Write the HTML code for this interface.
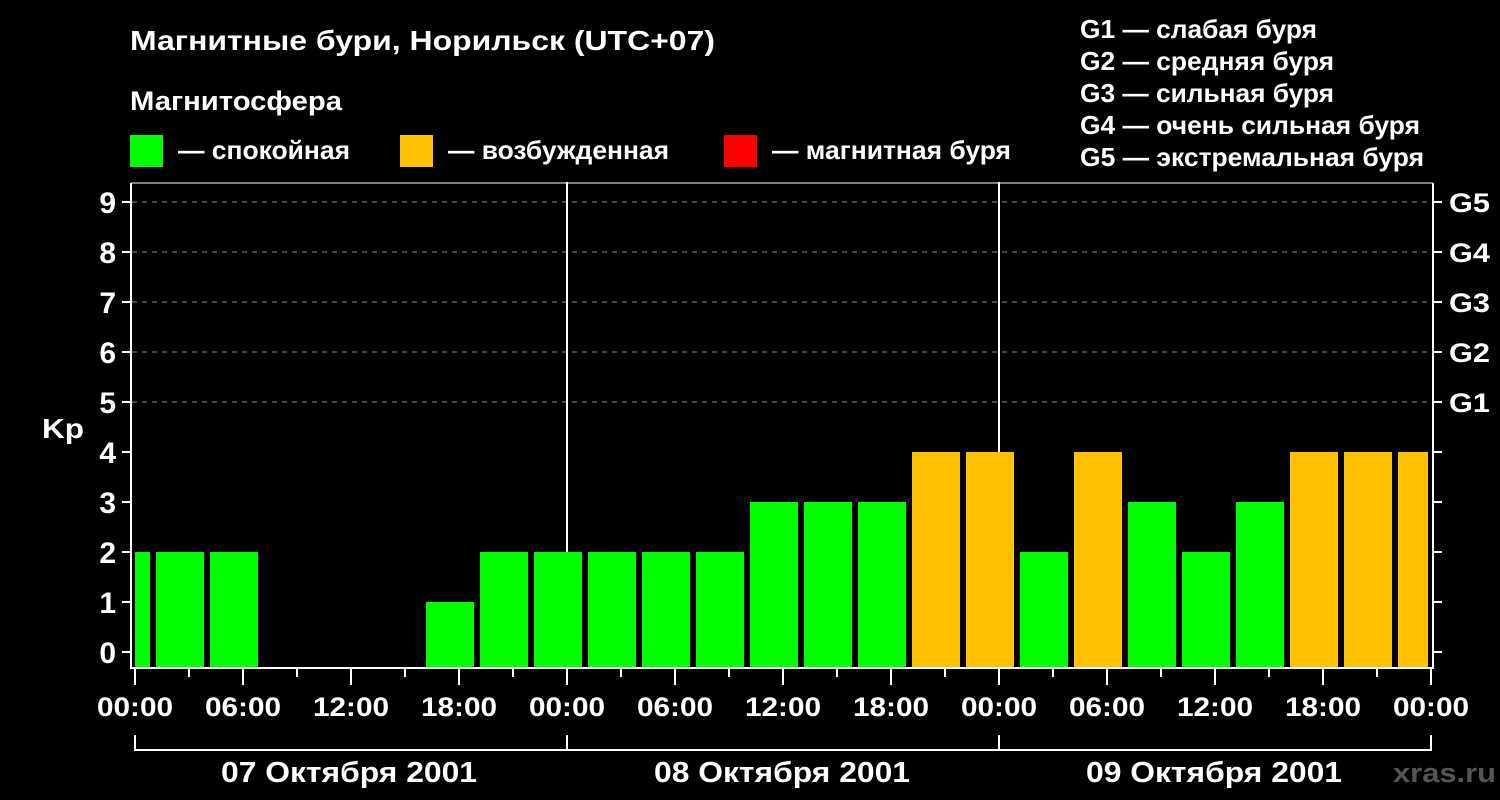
<!DOCTYPE html><html><head><meta charset="utf-8"><style>body{margin:0;background:#000}svg{display:block}text{font-family:"Liberation Sans",sans-serif;font-weight:bold;fill:#fff}</style></head><body>
<svg width="1500" height="800" viewBox="0 0 1500 800">
<rect width="1500" height="800" fill="#000"/>
<text x="130" y="50" font-size="28" textLength="585" lengthAdjust="spacingAndGlyphs">Магнитные бури, Норильск (UTC+07)</text>
<text x="130" y="110" font-size="27" textLength="212" lengthAdjust="spacingAndGlyphs">Магнитосфера</text>
<rect x="130" y="135" width="33" height="32" fill="#00ff00"/><text x="178" y="159" font-size="26" textLength="172" lengthAdjust="spacingAndGlyphs">— спокойная</text>
<rect x="400" y="135" width="33" height="32" fill="#ffc000"/><text x="448" y="159" font-size="26" textLength="221" lengthAdjust="spacingAndGlyphs">— возбужденная</text>
<rect x="724" y="135" width="33" height="32" fill="#ff0000"/><text x="772" y="159" font-size="26" textLength="239" lengthAdjust="spacingAndGlyphs">— магнитная буря</text>
<g font-size="26"><text x="1080" y="38" textLength="237" lengthAdjust="spacingAndGlyphs">G1 — слабая буря</text><text x="1080" y="70" textLength="254" lengthAdjust="spacingAndGlyphs">G2 — средняя буря</text><text x="1080" y="102" textLength="254" lengthAdjust="spacingAndGlyphs">G3 — сильная буря</text><text x="1080" y="134" textLength="340" lengthAdjust="spacingAndGlyphs">G4 — очень сильная буря</text><text x="1080" y="166" textLength="344" lengthAdjust="spacingAndGlyphs">G5 — экстремальная буря</text></g>
<g stroke="#888" stroke-width="1" stroke-dasharray="5,5"><line x1="132" x2="1432" y1="202" y2="202"/><line x1="132" x2="1432" y1="252" y2="252"/><line x1="132" x2="1432" y1="302" y2="302"/><line x1="132" x2="1432" y1="352" y2="352"/><line x1="132" x2="1432" y1="402" y2="402"/></g>
<g fill="#00ff00"><rect x="135" y="552" width="15" height="116"/><rect x="156" y="552" width="48" height="116"/><rect x="210" y="552" width="48" height="116"/><rect x="426" y="602" width="48" height="66"/><rect x="480" y="552" width="48" height="116"/><rect x="534" y="552" width="48" height="116"/><rect x="588" y="552" width="48" height="116"/><rect x="642" y="552" width="48" height="116"/><rect x="696" y="552" width="48" height="116"/><rect x="750" y="502" width="48" height="166"/><rect x="804" y="502" width="48" height="166"/><rect x="858" y="502" width="48" height="166"/><rect x="1020" y="552" width="48" height="116"/><rect x="1128" y="502" width="48" height="166"/><rect x="1182" y="552" width="48" height="116"/><rect x="1236" y="502" width="48" height="166"/></g>
<g fill="#ffc000"><rect x="912" y="452" width="48" height="216"/><rect x="966" y="452" width="48" height="216"/><rect x="1074" y="452" width="48" height="216"/><rect x="1290" y="452" width="48" height="216"/><rect x="1344" y="452" width="48" height="216"/><rect x="1398" y="452" width="30" height="216"/></g>
<g stroke="#fff" stroke-width="2" fill="none">
<path d="M131 183V668H1433V183"/><line x1="131" x2="1433" y1="183" y2="183" stroke-width="1"/>
<line x1="567" x2="567" y1="182" y2="552"/><line x1="999" x2="999" y1="182" y2="452"/>
<path d="M122 202h9M122 252h9M122 302h9M122 352h9M122 402h9M122 452h9M122 502h9M122 552h9M122 602h9M122 652h9"/>
<path d="M1433 202h9M1433 252h9M1433 302h9M1433 352h9M1433 402h9M1433 452h9M1433 502h9M1433 552h9M1433 602h9M1433 652h9"/>
<path d="M135 668v17M189 668v9M243 668v17M297 668v9M351 668v17M405 668v9M459 668v17M513 668v9M567 668v17M621 668v9M675 668v17M729 668v9M783 668v17M837 668v9M891 668v17M945 668v9M999 668v17M1053 668v9M1107 668v17M1161 668v9M1215 668v17M1269 668v9M1323 668v17M1377 668v9M1431 668v17"/>
<path d="M135 735V750H1431V735M567 735v15M999 735v15"/>
</g>
<g font-size="30" text-anchor="end"><text x="116" y="213">9</text><text x="116" y="263">8</text><text x="116" y="313">7</text><text x="116" y="363">6</text><text x="116" y="413">5</text><text x="116" y="463">4</text><text x="116" y="513">3</text><text x="116" y="563">2</text><text x="116" y="613">1</text><text x="116" y="663">0</text></g>
<text x="42" y="438" font-size="28" textLength="42" lengthAdjust="spacingAndGlyphs">Kp</text>
<g font-size="27"><text x="1449" y="212" textLength="41" lengthAdjust="spacingAndGlyphs">G5</text><text x="1449" y="262" textLength="41" lengthAdjust="spacingAndGlyphs">G4</text><text x="1449" y="312" textLength="41" lengthAdjust="spacingAndGlyphs">G3</text><text x="1449" y="362" textLength="41" lengthAdjust="spacingAndGlyphs">G2</text><text x="1449" y="412" textLength="41" lengthAdjust="spacingAndGlyphs">G1</text></g>
<g font-size="27" text-anchor="middle"><text x="135" y="716" textLength="76" lengthAdjust="spacingAndGlyphs">00:00</text><text x="243" y="716" textLength="76" lengthAdjust="spacingAndGlyphs">06:00</text><text x="351" y="716" textLength="76" lengthAdjust="spacingAndGlyphs">12:00</text><text x="459" y="716" textLength="76" lengthAdjust="spacingAndGlyphs">18:00</text><text x="567" y="716" textLength="76" lengthAdjust="spacingAndGlyphs">00:00</text><text x="675" y="716" textLength="76" lengthAdjust="spacingAndGlyphs">06:00</text><text x="783" y="716" textLength="76" lengthAdjust="spacingAndGlyphs">12:00</text><text x="891" y="716" textLength="76" lengthAdjust="spacingAndGlyphs">18:00</text><text x="999" y="716" textLength="76" lengthAdjust="spacingAndGlyphs">00:00</text><text x="1107" y="716" textLength="76" lengthAdjust="spacingAndGlyphs">06:00</text><text x="1215" y="716" textLength="76" lengthAdjust="spacingAndGlyphs">12:00</text><text x="1323" y="716" textLength="76" lengthAdjust="spacingAndGlyphs">18:00</text><text x="1431" y="716" textLength="76" lengthAdjust="spacingAndGlyphs">00:00</text></g>
<g font-size="29" text-anchor="middle"><text x="349" y="782" textLength="256" lengthAdjust="spacingAndGlyphs">07 Октября 2001</text><text x="782" y="782" textLength="256" lengthAdjust="spacingAndGlyphs">08 Октября 2001</text><text x="1214" y="782" textLength="256" lengthAdjust="spacingAndGlyphs">09 Октября 2001</text></g>
<text x="1393" y="782" font-size="27" textLength="103" lengthAdjust="spacingAndGlyphs" style="fill:#555">xras.ru</text>
</svg></body></html>
